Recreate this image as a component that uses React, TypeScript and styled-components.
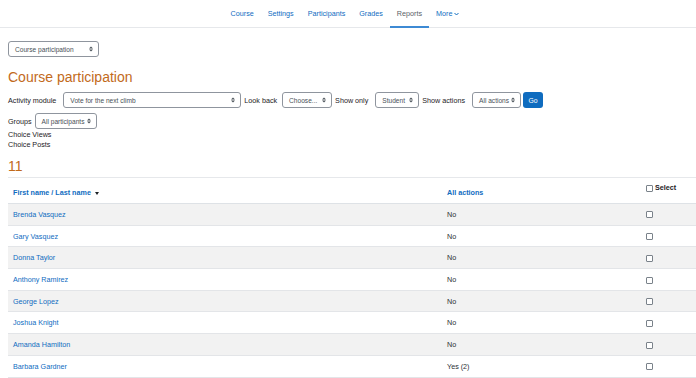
import React from "react";
import styled, { createGlobalStyle } from "styled-components";

const Global = createGlobalStyle`
	body {
		margin: 0;
		background: #fff;
		font-family: "Liberation Sans", Arial, sans-serif;
		font-size: 7.2px;
		color: #1d2125;
	}
`;

const Nav = styled.nav`
	height: 28px;
	border-bottom: 1px solid #e6e8eb;
	display: flex;
	justify-content: center;
	box-sizing: border-box;
	padding-right: 6px;
`;

const NavItem = styled.a<{ $active?: boolean }>`
	display: flex;
	align-items: center;
	padding: 0 7px;
	height: 28px;
	box-sizing: border-box;
	color: ${({ $active }) => ($active ? "#5b6168" : "#0f6cbf")};
	border-bottom: 2px solid ${({ $active }) => ($active ? "#3d8ad4" : "transparent")};
	text-decoration: none;
	gap: 2px;
	padding-top: 1px;
`;

const Page = styled.main`
	padding: 13px 0 0 8px;
`;

const Select = styled.div<{ $w: number }>`
	display: inline-flex;
	align-items: center;
	justify-content: space-between;
	width: ${({ $w }) => $w}px;
	height: 16px;
	box-sizing: border-box;
	padding: 0 5px 0 6px;
	border: 1px solid #8f959e;
	border-radius: 3px;
	background: #fff;
	color: #495057;
	font-size: 6.6px;
	white-space: nowrap;
`;

const Heading = styled.h2`
	margin: 11px 0 0;
	font-size: 14px;
	font-weight: 400;
	color: #c26a1b;
	line-height: 19px;
`;

const FilterRow = styled.div<{ $mt: number }>`
	display: flex;
	align-items: center;
	gap: 3px;
	margin-top: ${({ $mt }) => $mt}px;
`;

const Label = styled.span<{ $ml?: number }>`
	margin-right: ${({ $ml }) => $ml ?? 4}px;
`;

const GoButton = styled.button`
	height: 16px;
	width: 20px;
	border: none;
	border-radius: 3px;
	background: #0f6cbf;
	color: #fff;
	font-family: inherit;
	font-size: 6.8px;
	padding: 0;
	margin-left: -1px;
`;

const Plain = styled.div<{ $mt?: number }>`
	line-height: 10px;
	margin-top: ${({ $mt }) => $mt ?? 0}px;
`;

const Count = styled.h3`
	margin: 6px 0 0;
	font-size: 14px;
	font-weight: 400;
	color: #c26a1b;
	line-height: 20px;
`;

const Table = styled.table`
	width: calc(100% + 20px);
	border-collapse: collapse;
	border-top: 1px solid #e6e8eb;
	margin-top: 1px;
`;

const Th = styled.th<{ $w?: number; $top?: boolean }>`
	text-align: left;
	font-weight: 700;
	color: #0f6cbf;
	height: 26px;
	padding: ${({ $top }) => ($top ? "5px 5px 0" : "4px 5px 0")};
	vertical-align: ${({ $top }) => ($top ? "top" : "middle")};
	width: ${({ $w }) => ($w ? `${$w}px` : "auto")};
	box-sizing: border-box;
	border-bottom: 1px solid #dee2e6;
`;

const Tr = styled.tr<{ $shade: boolean }>`
	background: ${({ $shade }) => ($shade ? "#f2f2f2" : "#fff")};
`;

const Td = styled.td<{ $link?: boolean }>`
	height: 21.7px;
	padding: 0 5px;
	box-sizing: border-box;
	border-bottom: 1px solid #e3e5e8;
	color: ${({ $link }) => ($link ? "#0f6cbf" : "#2b3035")};
`;

const Box = styled.span`
	display: inline-block;
	width: 5px;
	height: 5px;
	border: 1px solid #7a828a;
	border-radius: 1px;
	background: #fff;
	vertical-align: middle;
	margin-right: 2px;
`;

const SortCaret = styled.span`
	display: inline-block;
	width: 0;
	height: 0;
	border-left: 2.5px solid transparent;
	border-right: 2.5px solid transparent;
	border-top: 3px solid #1d2125;
	margin-left: 4px;
	vertical-align: middle;
`;

const Sel = ({ w, children }: { w: number; children: React.ReactNode }) => (
	<Select $w={w}>
		<span>{children}</span>
		<svg width="4" height="6" viewBox="0 0 4 6" style={{ flexShrink: 0, marginLeft: 2 }}>
			<path d="M0 2.4L2 0.4L4 2.4Z M0 3.6L2 5.6L4 3.6Z" fill="#495057" />
		</svg>
	</Select>
);

const rows: [string, string][] = [
	["Brenda Vasquez", "No"],
	["Gary Vasquez", "No"],
	["Donna Taylor", "No"],
	["Anthony Ramirez", "No"],
	["George Lopez", "No"],
	["Joshua Knight", "No"],
	["Amanda Hamilton", "No"],
	["Barbara Gardner", "Yes (2)"],
];

export default function App() {
	return (
		<>
			<Global />
			<Nav>
				<NavItem>Course</NavItem>
				<NavItem>Settings</NavItem>
				<NavItem>Participants</NavItem>
				<NavItem>Grades</NavItem>
				<NavItem $active>Reports</NavItem>
				<NavItem>
					More
					<svg width="5" height="4" viewBox="0 0 10 8">
						<path d="M1 2l4 4 4-4" stroke="#0f6cbf" strokeWidth="2" fill="none" />
					</svg>
				</NavItem>
			</Nav>
			<Page>
				<Sel w={91}>Course participation</Sel>
				<Heading>Course participation</Heading>
				<FilterRow $mt={5}>
					<Label>Activity module</Label>
					<Sel w={178}>Vote for the next climb</Sel>
					<Label $ml={2}>Look back</Label>
					<Sel w={50}>Choose...</Sel>
					<Label $ml={4}>Show only</Label>
					<Sel w={44}>Student</Sel>
					<Label $ml={4}>Show actions</Label>
					<Sel w={49}>All actions</Sel>
					<GoButton>Go</GoButton>
				</FilterRow>
				<FilterRow $mt={5}>
					<Label $ml={0}>Groups</Label>
					<Sel w={62}>All participants</Sel>
				</FilterRow>
				<Plain $mt={1}>Choice Views</Plain>
				<Plain>Choice Posts</Plain>
				<Count>11</Count>
				<Table>
					<thead>
						<tr>
							<Th $w={434}>
								First name / Last name
								<SortCaret />
							</Th>
							<Th $w={199}>All actions</Th>
							<Th $top>
								<span style={{ color: "#1d2125" }}>
									<Box />
									Select
								</span>
							</Th>
						</tr>
					</thead>
					<tbody>
						{rows.map(([name, action], i) => (
							<Tr key={name} $shade={i % 2 === 0}>
								<Td $link>{name}</Td>
								<Td>{action}</Td>
								<Td>
									<Box />
								</Td>
							</Tr>
						))}
					</tbody>
				</Table>
			</Page>
		</>
	);
}
